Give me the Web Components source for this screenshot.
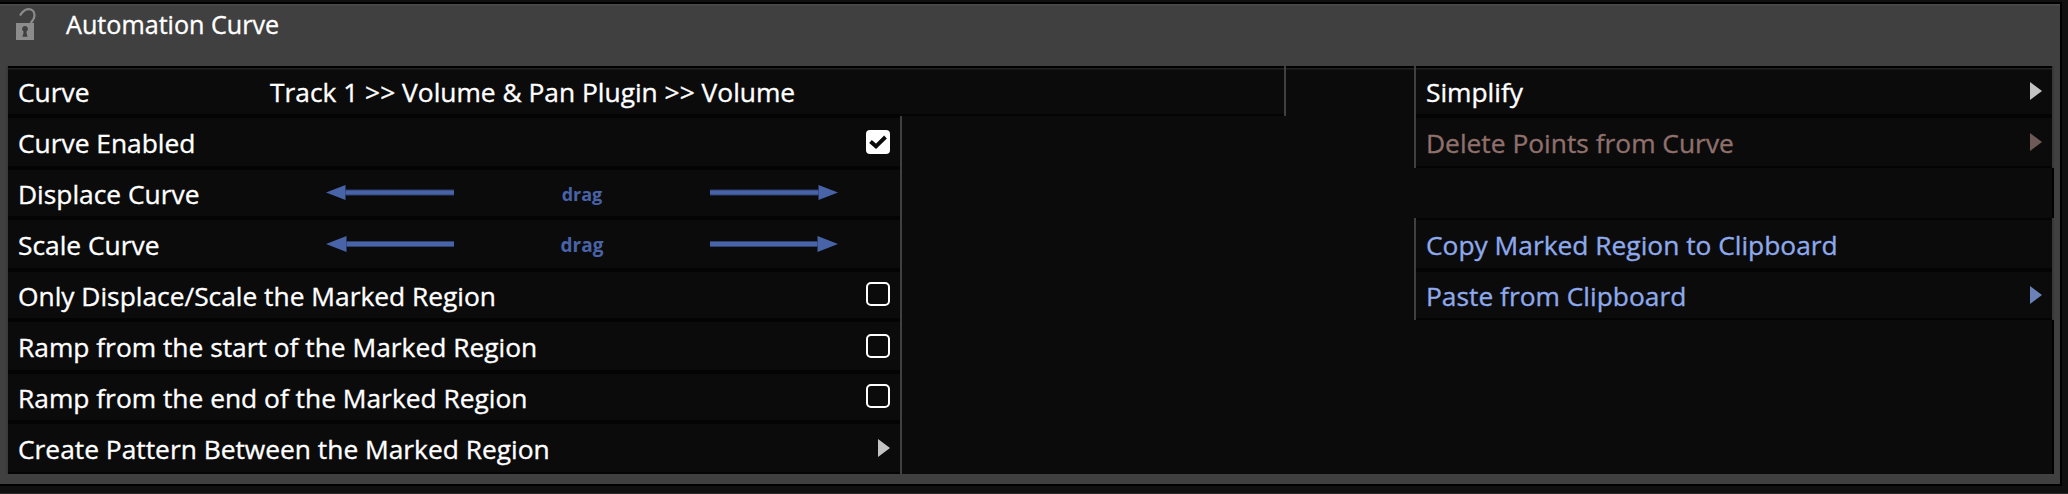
<!DOCTYPE html>
<html lang="en">
<head>
<meta charset="utf-8">
<title>Automation Curve</title>
<style>
html, body { margin: 0; height: 100%; overflow: hidden; background: #101010; }
body { font-family: "Open Sans", sans-serif; color: #fff; -webkit-text-stroke: .35px currentColor; }
</style>
</head>
<body>
<editor-panel heading="Automation Curve">
  <row-column slot="left">
    <menu-row class="wide" label="Curve" first>Track 1 &gt;&gt; Volume &amp; Pan Plugin &gt;&gt; Volume</menu-row>
    <menu-row label="Curve Enabled" tall><check-box slot="end" checked></check-box></menu-row>
    <menu-row class="drag" label="Displace Curve"><drag-bar></drag-bar></menu-row>
    <menu-row class="drag" label="Scale Curve" tall><drag-bar large></drag-bar></menu-row>
    <menu-row label="Only Displace/Scale the Marked Region"><check-box slot="end"></check-box></menu-row>
    <menu-row label="Ramp from the start of the Marked Region" tall><check-box slot="end"></check-box></menu-row>
    <menu-row label="Ramp from the end of the Marked Region"><check-box slot="end"></check-box></menu-row>
    <menu-row label="Create Pattern Between the Marked Region" tall><sub-arrow slot="end"></sub-arrow></menu-row>
  </row-column>
  <row-column slot="right">
    <menu-row right first label="Simplify"><sub-arrow slot="end"></sub-arrow></menu-row>
    <menu-row right tall tone="rose" label="Delete Points from Curve"><sub-arrow slot="end"></sub-arrow></menu-row>
    <row-space></row-space>
    <menu-row right tone="blue" label="Copy Marked Region to Clipboard" tall></menu-row>
    <menu-row right tone="blue" label="Paste from Clipboard"><sub-arrow slot="end"></sub-arrow></menu-row>
  </row-column>
</editor-panel>

<script>
class Base extends HTMLElement {
  connectedCallback() {
    if (this.shadowRoot) return;
    const root = this.attachShadow({ mode: 'open' });
    root.innerHTML = this.render();
  }
}

customElements.define('lock-icon', class extends Base {
  render() {
    return `<style>:host{display:block;width:24px;height:34px}svg{display:block}</style>
    <svg width="24" height="34" viewBox="0 0 24 34">
      <path d="M5 8.5C7.500 4.500 10 2.200 13.500 2.200C17 2.200 19.500 4.500 19.500 8C19.500 11.500 17.500 14 15.600 16" fill="none" stroke="#8c8c8c" stroke-width="2.200"/>
      <path d="M1 16H19V33H1Z" fill="#8c8c8c"/>
      <path d="M10 19A2.900 2.900 0 0 0 8.500 24.400C8.500 26.500 8 28 7.300 29.700H12.700C12 28 11.500 26.500 11.500 24.400A2.900 2.900 0 0 0 10 19Z" fill="#404040"/>
    </svg>`;
  }
});

customElements.define('editor-panel', class extends Base {
  render() {
    return `<style>
      :host{display:block;height:493px;border-bottom:1px solid #2b2b2b;background:#101010}
      .frame{box-sizing:border-box;width:2062px;height:486px;padding-top:2px}
      .panel{box-sizing:border-box;height:484px;border:solid #000;border-width:2px 2px 2px 0;background:#404040;padding:0 6px 10px}
      header{box-sizing:border-box;height:62px;margin:0 -6px;padding-left:15px;display:flex;gap:27px;border-top:1px solid #4b4b4b;box-shadow:inset 0 1px #454545;font-size:25.15px;line-height:38px}
      header lock-icon{margin-top:2px}
      .well{display:grid;grid-template-columns:1406px 640px;height:408px;
        border-left:2px solid #393939;background:
        linear-gradient(#000 0 2px,#222 2px 3px,#161616 3px 4px,transparent 4px),
        linear-gradient(90deg,#0b0b0b 0 2044px,#000 2044px)}
    </style>
    <div class="frame"><div class="panel">
      <header><lock-icon></lock-icon><span>${this.getAttribute('heading')}</span></header>
      <div class="well"><slot name="left"></slot><slot name="right"></slot></div>
    </div></div>`;
  }
});

customElements.define('row-column', class extends Base {
  render() {
    return `<style>:host{display:flex;flex-direction:column;align-items:flex-start}</style><slot></slot>`;
  }
});

customElements.define('row-space', class extends Base {
  render() { return `<style>:host{display:block;height:50px}</style>`; }
});

customElements.define('menu-row', class extends Base {
  render() {
    return `<style>
      :host{--pad:0px;box-sizing:border-box;display:flex;width:894px;height:50px;padding:0 10px;
        border-right:2px solid #404040;font-size:26.35px;line-height:52px;white-space:nowrap;
        background:linear-gradient(#040404 0 2px,#0b0b0b 2px calc(100% - 2px),#040404 calc(100% - 2px))}
      :host([tall]){--pad:1px;height:52px;line-height:54px}
      :host([first]){background:linear-gradient(#000 0 2px,#222 2px 3px,#161616 3px 4px,#0b0b0b 4px 48px,#040404 48px)}
      :host(.wide){width:1278px}
      :host([right]){width:640px;border-left:2px solid #404040;border-right-color:#393939}
      :host([tone=rose]){color:#8f706c;--arrow:#6f5957}
      :host([tone=blue]){color:#8ea9ec;--arrow:#6a82b8}
      .label{flex:none}
      :host(.wide) .label{width:252px}
      :host(.drag) .label{width:308px}
      .end{margin-left:auto}
    </style>
    <span class="label">${this.getAttribute('label')}</span><slot></slot>
    <div class="end"><slot name="end"></slot></div>`;
  }
});

customElements.define('check-box', class extends Base {
  render() {
    const mark = this.hasAttribute('checked')
      ? `<rect width="24" height="24" rx="4" fill="#fff"/><path d="M4.500 11.500L10 16.300L19.500 7" fill="none" stroke="#0b0b0b" stroke-width="3.900"/>`
      : `<rect x="1" y="1" width="22" height="22" rx="4" fill="none" stroke="#fff" stroke-width="2"/>`;
    return `<style>:host{display:block;margin-top:calc(12px + var(--pad) * 2)}svg{display:block}</style>
      <svg width="24" height="24" viewBox="0 0 24 24">${mark}</svg>`;
  }
});

customElements.define('sub-arrow', class extends Base {
  render() {
    return `<style>:host{display:block;margin-top:calc(16px + var(--pad))}svg{display:block}path{fill:var(--arrow,#c3c3c3)}</style>
      <svg width="12" height="18" viewBox="0 0 12 18"><path d="M0 0L12 9L0 18Z"/></svg>`;
  }
});

customElements.define('drag-bar', class extends Base {
  render() {
    const big = this.hasAttribute('large');
    const h = big ? 16 : 15, m = h / 2, x = big ? 20.500 : 19.500;
    const arrow = `<path d="M0 ${m}L${x} 0V${h}Z" fill="#4863a8"/><rect x="${x}" y="${m - 3}" width="${128 - x}" height="6" fill="#2f416e"/><rect x="${x}" y="${m - 2}" width="${128 - x}" height="4" fill="#4863a8"/>`;
    return `<style>
      :host{display:grid;grid-template-columns:128px 256px 128px;color:#4863a8}
      svg{display:block;margin-top:${big ? 18 : 17}px}
      svg.r{transform:scaleX(-1)}
      span{text-align:center;font-weight:700;font-size:${big ? 19 : 18}px;line-height:${big ? 54 : 52}px;-webkit-text-stroke:0}
    </style>
    <svg width="128" height="${h}" viewBox="0 0 128 ${h}">${arrow}</svg><span>drag</span>
    <svg class="r" width="128" height="${h}" viewBox="0 0 128 ${h}">${arrow}</svg>`;
  }
});
</script>
</body>
</html>
